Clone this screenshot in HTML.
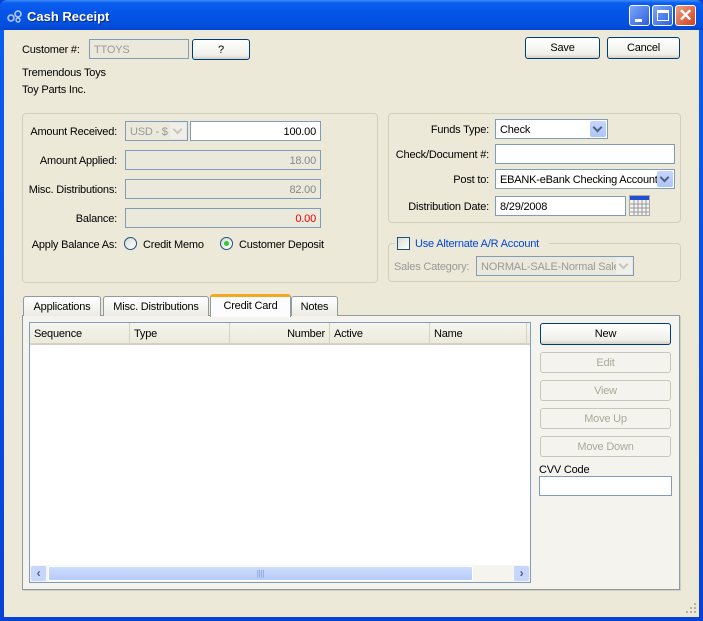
<!DOCTYPE html>
<html><head><meta charset="utf-8"><style>
*{box-sizing:border-box;margin:0;padding:0}
body{width:703px;height:621px;overflow:hidden;font-family:"Liberation Sans",sans-serif;font-size:11px;letter-spacing:-0.2px;color:#000;background:#0a3fd0}
.win{position:absolute;left:0;top:0;width:703px;height:621px;background:linear-gradient(#0a5ef0,#0842d4);border-radius:7px 7px 0 0}
.title{position:absolute;left:0;top:0;width:703px;height:30px;background:linear-gradient(#3d8cf6 0,#0a5ef0 3px,#0556e8 12px,#0450df 24px,#0345d0 30px);border-radius:7px 7px 0 0}
.title span{position:absolute;left:27px;top:9px;color:#fff;font-weight:bold;font-size:13px;letter-spacing:0;text-shadow:1px 1px #0a2a80}
.body{position:absolute;left:4px;top:30px;width:695px;height:587px;background:#ECE9D8}
.a{position:absolute}
.lbl{position:absolute;white-space:nowrap;margin-top:2px}
.r{text-align:right}
.fld{position:absolute;background:#fff;border:1px solid #7f9db9;padding:3px 4px 0;height:20px;white-space:nowrap;line-height:14px;overflow:hidden}
.dis{background:#EBE9DC;color:#888}
.btn{position:absolute;border:1px solid #003c74;border-radius:3px;background:linear-gradient(#fff,#f0f0ea 80%,#d6d0c5);text-align:center;line-height:21px}
.btnd{border-color:#c9c7ba;color:#aca899;background:#f4f3ee}
.grp{position:absolute;border:1px solid #d0d0bf;border-radius:4px}
.dd{position:absolute;right:1px;top:1px;width:16px;height:16px;background:linear-gradient(#c6d6fc,#aec6f7);border-radius:2px}
.dd:after{content:"";position:absolute;left:4px;top:3px;width:5px;height:5px;border-right:2px solid #4d6185;border-bottom:2px solid #4d6185;transform:rotate(45deg)}
.ddd{background:#f0efea}.ddd:after{border-color:#c9c7ba}
.radio{position:absolute;width:13px;height:13px;border:1px solid #1c5180;border-radius:50%;background:linear-gradient(135deg,#dcdcd5,#fff)}
.tab{position:absolute;top:296px;height:20px;border:1px solid #919b9c;border-bottom:none;border-radius:3px 3px 0 0;background:linear-gradient(#fff,#ecebe5);text-align:center;line-height:20px}
.th{position:absolute;top:0;height:21px;border-right:1px solid #d6d2c2;line-height:23px;padding:0 4px}
</style></head><body>
<div class="win">
<div class="title">
 <svg class="a" style="left:7px;top:9px" width="16" height="14"><circle cx="4" cy="9" r="3" fill="none" stroke="#b8c8e8" stroke-width="1.6"/><circle cx="11" cy="5" r="3" fill="none" stroke="#b8c8e8" stroke-width="1.6"/><circle cx="11" cy="11" r="2" fill="none" stroke="#b8c8e8" stroke-width="1.4"/></svg>
 <span>Cash Receipt</span>
 <div class="a" style="left:629px;top:5px;width:21px;height:21px;border:1px solid #fff;border-radius:3px;background:linear-gradient(135deg,#7fa6f8,#2b5fe0)"><div class="a" style="left:5px;top:13px;width:7px;height:3px;background:#fff"></div></div>
 <div class="a" style="left:652px;top:5px;width:21px;height:21px;border:1px solid #fff;border-radius:3px;background:linear-gradient(135deg,#7fa6f8,#2b5fe0)"><div class="a" style="left:4px;top:4px;width:12px;height:11px;border:1px solid #fff;border-top-width:3px"></div></div>
 <div class="a" style="left:675px;top:5px;width:21px;height:21px;border:1px solid #fff;border-radius:3px;background:linear-gradient(135deg,#f0a080,#d04020);color:#fff;font-size:17px;font-weight:bold;text-align:center;line-height:19px">✕</div>
</div>
<div class="body">
<div style="position:absolute;left:-4px;top:-30px;width:703px;height:621px">
 <div class="lbl" style="left:22px;top:42px">Customer #:</div>
 <div class="fld dis" style="left:89px;top:39px;width:100px;color:#999">TTOYS</div>
 <div class="btn" style="left:192px;top:39px;width:58px;height:21px">?</div>
 <div class="btn" style="left:525px;top:37px;width:75px;height:22px">Save</div>
 <div class="btn" style="left:607px;top:37px;width:73px;height:22px">Cancel</div>
 <div class="lbl" style="left:22px;top:65px">Tremendous Toys</div>
 <div class="lbl" style="left:22px;top:82px">Toy Parts Inc.</div>

 <div class="grp" style="left:22px;top:113px;width:356px;height:170px"></div>
 <div class="lbl r" style="left:20px;width:97px;top:124px">Amount Received:</div>
 <div class="fld dis" style="left:125px;top:121px;width:63px;color:#999">USD - $<div class="dd ddd"></div></div>
 <div class="fld r" style="left:190px;top:121px;width:131px">100.00</div>
 <div class="lbl r" style="left:20px;width:97px;top:153px">Amount Applied:</div>
 <div class="fld dis r" style="left:125px;top:150px;width:196px">18.00</div>
 <div class="lbl r" style="left:14px;width:103px;top:182px">Misc. Distributions:</div>
 <div class="fld dis r" style="left:125px;top:179px;width:196px">82.00</div>
 <div class="lbl r" style="left:20px;width:97px;top:211px">Balance:</div>
 <div class="fld dis r" style="left:125px;top:208px;width:196px;color:#e00">0.00</div>
 <div class="lbl r" style="left:20px;width:97px;top:237px">Apply Balance As:</div>
 <div class="radio" style="left:124px;top:237px"></div>
 <div class="lbl" style="left:143px;top:237px">Credit Memo</div>
 <div class="radio" style="left:220px;top:237px"><div class="a" style="left:3px;top:3px;width:5px;height:5px;border-radius:50%;background:#3c3"></div></div>
 <div class="lbl" style="left:239px;top:237px">Customer Deposit</div>

 <div class="grp" style="left:388px;top:113px;width:293px;height:110px"></div>
 <div class="lbl r" style="left:390px;width:99px;top:122px">Funds Type:</div>
 <div class="fld" style="left:495px;top:119px;width:113px">Check<div class="dd"></div></div>
 <div class="lbl r" style="left:386px;width:103px;top:147px">Check/Document #:</div>
 <div class="fld" style="left:495px;top:144px;width:180px"></div>
 <div class="lbl r" style="left:390px;width:99px;top:172px">Post to:</div>
 <div class="fld" style="left:495px;top:169px;width:180px">EBANK-eBank Checking Account<div class="dd"></div></div>
 <div class="lbl r" style="left:390px;width:99px;top:199px">Distribution Date:</div>
 <div class="fld" style="left:495px;top:196px;width:131px">8/29/2008</div>
 <svg class="a" style="left:629px;top:195px" width="21" height="21"><rect x="0.5" y="0.5" width="20" height="20" fill="#f4f4f4" stroke="#aaa"/><rect x="1" y="1" width="19" height="4" fill="#2050d0"/><path d="M1 9H20M1 13H20M1 17H20M5 5V20M9 5V20M13 5V20M17 5V20" stroke="#999" stroke-width="1"/></svg>

 <div class="grp" style="left:388px;top:243px;width:293px;height:39px"></div>
 <div class="a" style="left:395px;top:235px;width:154px;height:16px;background:#ECE9D8"></div>
 <div class="a" style="left:397px;top:237px;width:13px;height:13px;border:1px solid #1c5180;background:linear-gradient(135deg,#dcdcd5,#fff)"></div>
 <div class="lbl" style="left:415px;top:236px;color:#0046d5">Use Alternate A/R Account</div>
 <div class="lbl" style="left:394px;top:259px;color:#999">Sales Category:</div>
 <div class="fld dis" style="left:476px;top:256px;width:158px;color:#999">NORMAL-SALE-Normal Sale<div class="dd ddd"></div></div>

 <div class="a" style="left:22px;top:315px;width:658px;height:275px;border:1px solid #919b9c;background:#f4f3ee;box-shadow:1px 1px 0 #d0cfc6"></div>
 <div class="tab" style="left:23px;width:78px">Applications</div>
 <div class="tab" style="left:103px;width:106px">Misc. Distributions</div>
 <div class="tab" style="left:210px;top:294px;width:81px;height:23px;background:#fcfcfe;border-top:3px solid #f5a623;line-height:18px">Credit Card</div>
 <div class="tab" style="left:291px;width:47px">Notes</div>

 <div class="a" style="left:29px;top:322px;width:502px;height:261px;border:1px solid #7f9db9;background:#fff">
  <div class="a" style="left:0;top:0;width:500px;height:22px;background:linear-gradient(#f6f5ef,#ebeadb);border-bottom:2px solid #d6d2c2">
   <div class="th" style="left:0;width:100px">Sequence</div>
   <div class="th" style="left:100px;width:100px">Type</div>
   <div class="th" style="left:200px;width:100px;text-align:right">Number</div>
   <div class="th" style="left:300px;width:100px">Active</div>
   <div class="th" style="left:400px;width:97px">Name</div>
  </div>
  <div class="a" style="left:0;top:242px;width:500px;height:17px;background:#f5f4ef">
   <div class="a" style="left:1px;top:1px;width:15px;height:15px;background:#c6d6fc;border-radius:2px;color:#4d6185;font-size:12px;text-align:center;line-height:14px;font-weight:bold">‹</div>
   <div class="a" style="left:18px;top:1px;width:425px;height:15px;background:linear-gradient(#cddcfb,#b7cbf8);border:1px solid #fff;border-radius:2px;text-align:center;font-size:8px;color:#7f98d8;line-height:13px">||||</div>
   <div class="a" style="left:484px;top:1px;width:15px;height:15px;background:#c6d6fc;border-radius:2px;color:#4d6185;font-size:12px;text-align:center;line-height:14px;font-weight:bold">›</div>
  </div>
 </div>

 <div class="btn" style="left:540px;top:323px;width:131px;height:22px">New</div>
 <div class="btn btnd" style="left:540px;top:352px;width:131px;height:21px">Edit</div>
 <div class="btn btnd" style="left:540px;top:380px;width:131px;height:21px">View</div>
 <div class="btn btnd" style="left:540px;top:408px;width:131px;height:21px">Move Up</div>
 <div class="btn btnd" style="left:540px;top:436px;width:131px;height:21px">Move Down</div>
 <div class="lbl" style="left:539px;top:462px">CVV Code</div>
 <div class="fld" style="left:539px;top:476px;width:133px"></div>
 <svg class="a" style="left:685px;top:602px" width="12" height="12"><g fill="#b5b1a0"><rect x="9" y="1" width="2" height="2"/><rect x="5" y="5" width="2" height="2"/><rect x="9" y="5" width="2" height="2"/><rect x="1" y="9" width="2" height="2"/><rect x="5" y="9" width="2" height="2"/><rect x="9" y="9" width="2" height="2"/></g></svg>
</div>
</div>
</div>
</body></html>
